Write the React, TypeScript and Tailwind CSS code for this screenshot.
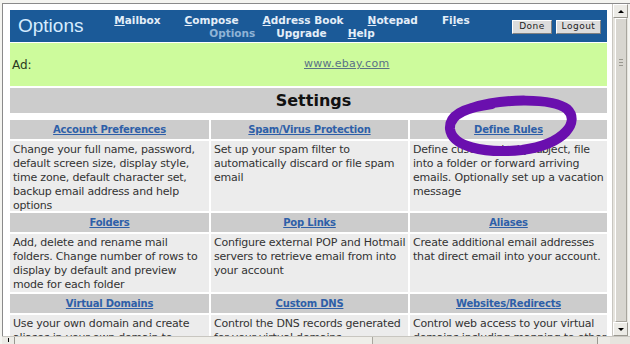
import React from 'react';

type Cell = { title: string; body: React.ReactNode };

const cells: Cell[][] = [
  [
    {
      title: 'Account Preferences',
      body: 'Change your full name, password, default screen size, display style, time zone, default character set, backup email address and help options',
    },
    {
      title: 'Spam/Virus Protection',
      body: 'Set up your spam filter to automatically discard or file spam email',
    },
    {
      title: 'Define Rules',
      // the middle words sit under the marker scribble
      body: (
        <>
          Define cust<span className="tracking-[-0.9px]">om rules by sub</span>ject, file
          <br />
          into a folder or forward arriving emails. Optionally set up a vacation message
        </>
      ),
    },
  ],
  [
    {
      title: 'Folders',
      body: 'Add, delete and rename mail folders. Change number of rows to display by default and preview mode for each folder',
    },
    {
      title: 'Pop Links',
      body: 'Configure external POP and Hotmail servers to retrieve email from into your account',
    },
    {
      title: 'Aliases',
      body: 'Create additional email addresses that direct email into your account.',
    },
  ],
  [
    {
      title: 'Virtual Domains',
      body: 'Use your own domain and create aliases in your own domain to forward email anywhere',
    },
    {
      title: 'Custom DNS',
      body: 'Control the DNS records generated for your virtual domains',
    },
    {
      title: 'Websites/Redirects',
      body: 'Control web access to your virtual domains including mapping to other web sites',
    },
  ],
];

const bodyHeights = ['h-[70px]', 'h-[58px]', 'h-[60px]'];

function NavLink({ pre = '', u, post }: { pre?: string; u: string; post: string }) {
  return (
    <span className="text-[#e4eef8]">
      {pre}
      <span className="underline">{u}</span>
      {post}
    </span>
  );
}

function Button({ label, w }: { label: string; w: string }) {
  return (
    <div
      className={`${w} h-[14px] flex items-center justify-center bg-[#dcdcdc] border border-t-white border-l-white border-b-[#808080] border-r-[#808080] text-[9px] tracking-[0.5px] text-[#222]`}
    >
      {label}
    </div>
  );
}

export default function App() {
  return (
    <div
      className="relative w-[630px] h-[344px] overflow-hidden bg-[#f4f4f0]"
      style={{ fontFamily: '"DejaVu Sans", Verdana, sans-serif' }}
    >
      <div className="absolute inset-0 pt-[3px] pl-[2px] flex flex-col">
        <div className="flex flex-1 min-h-0 border-t border-l border-[#8a8a8a]">
          {/* page */}
          <div className="flex-1 min-w-0 bg-white pt-[6px] pl-[7px] pr-[5px] overflow-hidden">
            {/* header */}
            <div className="h-[32px] bg-[#1b5a98] flex items-center pl-[8px] pr-[6px]">
              <div
                className="text-[19px] leading-none text-[#d6ecff] w-[84px] -mt-[1px]"
                style={{ fontFamily: '"Liberation Sans", Arial, sans-serif' }}
              >
                Options
              </div>
              <div className="flex flex-col items-center text-[10.5px] font-bold leading-[13px] w-[380px] mt-[1px]">
                <div className="flex gap-[24px]">
                  <NavLink u="M" post="ailbox" />
                  <NavLink u="C" post="ompose" />
                  <NavLink u="A" post="ddress Book" />
                  <NavLink u="N" post="otepad" />
                  <NavLink pre="Fi" u="l" post="es" />
                </div>
                <div className="flex gap-[21px]">
                  <span className="text-[#8fb3d6]">Options</span>
                  <span className="text-[#e4eef8]">Upgrade</span>
                  <NavLink u="H" post="elp" />
                </div>
              </div>
              <div className="ml-auto flex gap-[4px] mt-[1px]">
                <Button label="Done" w="w-[40px]" />
                <Button label="Logout" w="w-[45px]" />
              </div>
            </div>

            {/* ad */}
            <div className="mt-[1px] h-[43px] bg-[#cdfb9c] flex items-center pl-[2px] text-[12px] text-[#2b3b22]">
              <span className="w-[292px]">Ad:</span>
              <span className="text-[11px] text-[#5a7286] underline tracking-[0.3px]">www.ebay.com</span>
            </div>

            {/* settings title */}
            <div className="mt-[2px] h-[25px] bg-[#cccccc] flex items-center justify-center pl-[10px] text-[16px] font-bold text-[#111]">
              Settings
            </div>

            {/* table */}
            <div className="mt-[7px] grid grid-cols-[199px_197px_197px] gap-[2px]">
              {cells.map((row, ri) => (
                <React.Fragment key={ri}>
                  {row.map((c) => (
                    <div
                      key={c.title + 'h'}
                      className="h-[19px] bg-[#cccccc] flex items-center justify-center text-[10px] tracking-[-0.2px] font-bold text-[#2e5fa8] underline"
                    >
                      {c.title}
                    </div>
                  ))}
                  {row.map((c) => (
                    <div
                      key={c.title + 'b'}
                      className={`${bodyHeights[ri]} bg-[#ececec] pl-[3px] pr-0 pt-[2px] text-[11px] leading-[14px] tracking-[-0.2px] text-[#333] overflow-hidden`}
                    >
                      {c.body}
                    </div>
                  ))}
                </React.Fragment>
              ))}
            </div>
          </div>

          {/* vertical scrollbar */}
          <div className="w-[16px] flex flex-col bg-[#e6e4de] border-l border-[#c8c6c0] mr-[2px]">
            <div className="h-[14px] flex items-center justify-center bg-[#ecebe6] border border-t-white border-l-white border-b-[#9a9890] border-r-[#9a9890]">
              <div className="w-0 h-0 border-l-[3px] border-r-[3px] border-b-[3px] border-l-transparent border-r-transparent border-b-black" />
            </div>
            <div className="flex-1 flex items-center justify-center">
              <div className="w-[12px] h-full bg-[#d8d6d0] border border-t-white border-l-white border-b-[#a8a69e] border-r-[#a8a69e] flex flex-col items-center justify-start pt-[40px] gap-[2px]">
                <div className="w-[4px] h-px bg-[#9a9890]" />
                <div className="w-[4px] h-px bg-[#9a9890]" />
                <div className="w-[4px] h-px bg-[#9a9890]" />
              </div>
            </div>
            <div className="h-[14px] flex items-center justify-center bg-[#ecebe6] border border-t-white border-l-white border-b-[#9a9890] border-r-[#9a9890]">
              <div className="w-0 h-0 border-l-[3px] border-r-[3px] border-t-[3px] border-l-transparent border-r-transparent border-t-black" />
            </div>
          </div>
        </div>

        {/* horizontal scrollbar */}
        <div className="h-[8px] flex border-t border-[#c8c6c0] bg-[#e6e4de]">
          <div className="w-[13px] bg-[#ecebe6] border-r border-[#9a9890] flex items-start justify-center pt-[1px]">
            <div className="w-px h-[4px] bg-black" />
          </div>
          <div className="w-[358px] bg-[#efeee9] border-r border-[#a8a69e]" />
          <div className="flex-1" />
          <div className="w-[13px] bg-[#ecebe6] border-l border-[#9a9890] mr-[20px]" />
        </div>
      </div>

      {/* purple marker circle */}
      <svg className="absolute left-0 top-0 pointer-events-none" width="630" height="344">
        <path
          d="M 472 108 C 502 98, 553 98, 567 109 C 580 121, 566 144, 522 150 C 482 154, 452 146, 450 129 C 449 116, 462 108, 492 104"
          fill="none"
          stroke="#6a0fae"
          strokeWidth="10"
          strokeLinecap="round"
          strokeLinejoin="round"
        />
      </svg>
    </div>
  );
}
